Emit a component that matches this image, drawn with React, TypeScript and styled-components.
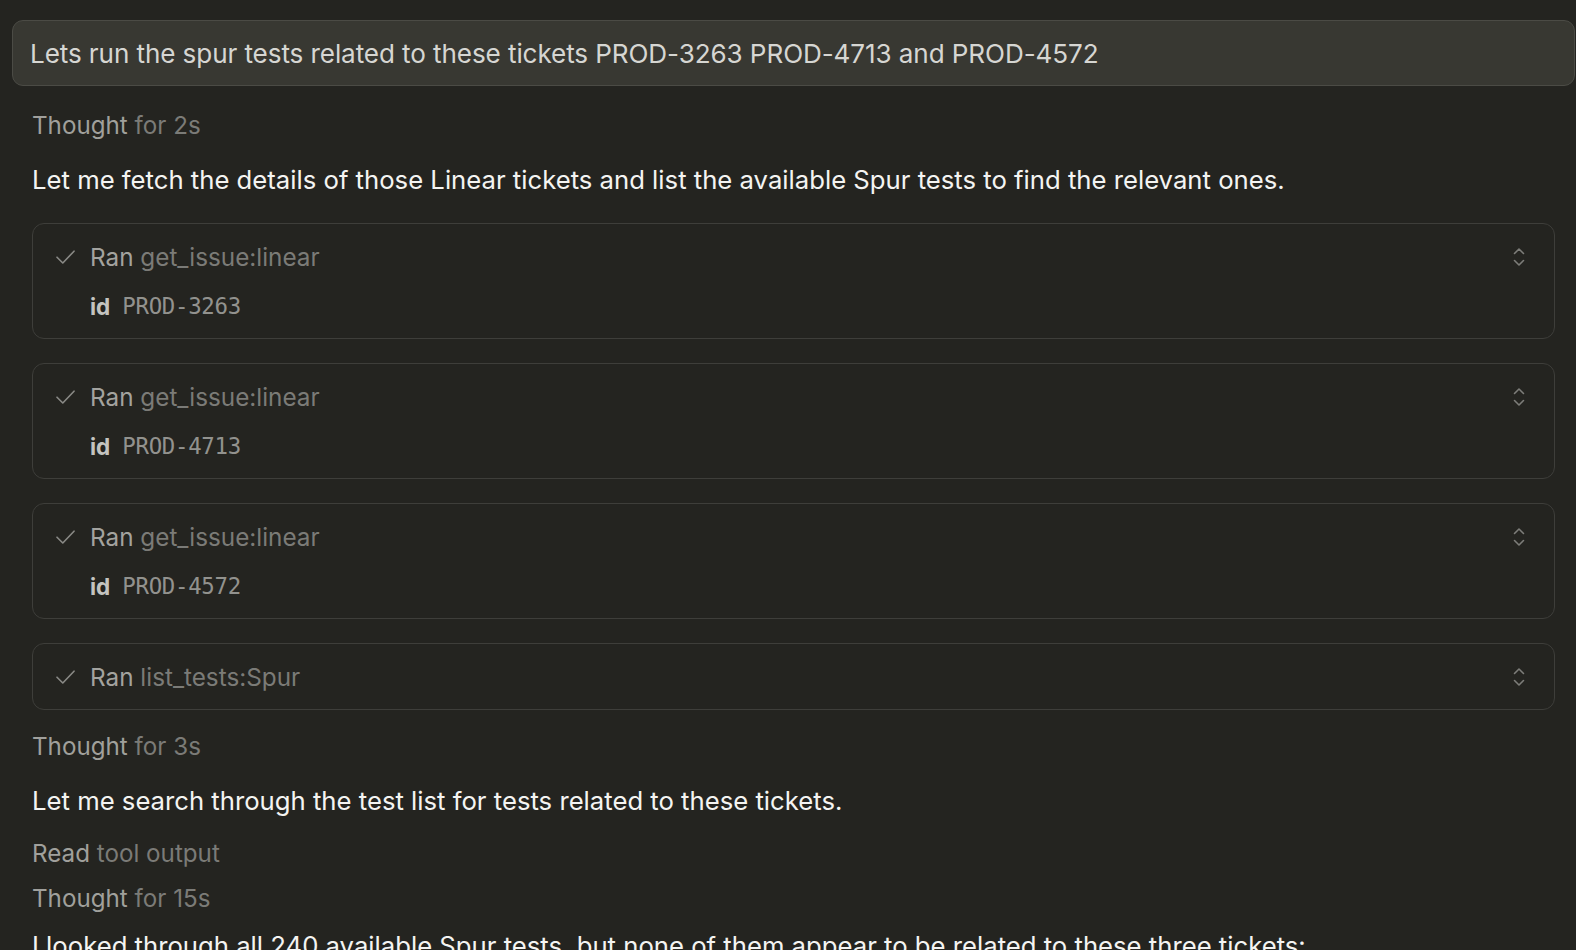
import React from "react";
import styled, { createGlobalStyle } from "styled-components";

const GlobalStyle = createGlobalStyle`
  html, body {
    margin: 0;
    padding: 0;
    background: #242420;
    overflow: hidden;
    height: 950px;
  }
  body {
    font-family: Inter, "Noto Sans", "Liberation Sans", sans-serif;
    -webkit-font-smoothing: antialiased;
  }
`;

const Thread = styled.div`
  display: flex;
  flex-direction: column;
  padding: 20px 1px 0 12px;
  & > * {
    flex-shrink: 0;
  }
`;

const UserMessage = styled.div`
  display: flex;
  align-items: center;
  height: 66px;
  box-sizing: border-box;
  padding: 0 17px;
  background: #383832;
  border: 1px solid #4b4b45;
  border-radius: 11px;
  color: #d6d6d2;
  font-size: 26.1px;
  letter-spacing: -0.1px;
  white-space: nowrap;
`;

const Body = styled.div`
  display: flex;
  flex-direction: column;
  padding: 0 20px;
  & > * {
    flex-shrink: 0;
  }
`;

const Meta = styled.div<{ $top: number }>`
  margin-top: ${(p) => p.$top}px;
  height: 32px;
  line-height: 32px;
  font-size: 24.2px;
  color: #a0a09c;
  white-space: nowrap;
`;

const MetaDim = styled.span`
  color: #7b7b77;
`;

const Paragraph = styled.p<{ $top: number }>`
  margin: ${(p) => p.$top}px 0 0;
  height: 32px;
  line-height: 32px;
  font-size: 25.7px;
  color: #f4f4f2;
  white-space: nowrap;
`;

const CardList = styled.div`
  display: flex;
  flex-direction: column;
  gap: 24px;
  margin-top: 27px;
`;

const Card = styled.div`
  display: flex;
  flex-direction: column;
  gap: 17px;
  padding: 17px 0 16px;
  border: 1px solid #3e3e3a;
  border-radius: 12px;
  background: #242420;
`;

const CardHeader = styled.div`
  display: flex;
  align-items: center;
  height: 32px;
  padding: 0 20px 0 23px;
`;

const CheckWrap = styled.span`
  display: flex;
  width: 34px;
  align-items: center;
`;

const RanLabel = styled.span`
  font-size: 24.3px;
  color: #a3a39f;
  white-space: nowrap;
`;

const ToolName = styled.span`
  color: #7b7b77;
`;

const Spacer = styled.span`
  flex: 1;
`;

const ChevronWrap = styled.span`
  display: flex;
  align-items: center;
  margin-right: 9px;
`;

const ParamRow = styled.div`
  display: flex;
  align-items: center;
  height: 32px;
  padding-left: 57px;
  gap: 12px;
`;

const ParamKey = styled.span`
  font-size: 22.5px;
  font-weight: 700;
  color: #c4c4c0;
`;

const ParamValue = styled.span`
  font-family: "DejaVu Sans Mono", "Liberation Mono", monospace;
  font-size: 22.4px;
  color: #92928e;
  letter-spacing: -0.3px;
`;

const Check = () => (
  <svg width="19" height="14" viewBox="0 0 19 14" fill="none">
    <path
      d="M1 7.2 L6.8 13 L18 1.2"
      stroke="#8a8a86"
      strokeWidth="1.6"
      strokeLinecap="round"
      strokeLinejoin="round"
    />
  </svg>
);

const UpDown = () => (
  <svg width="12" height="20" viewBox="0 0 12 20" fill="none">
    <path
      d="M1.5 6.5 L6 2 L10.5 6.5 M1.5 13.5 L6 18 L10.5 13.5"
      stroke="#7d7d79"
      strokeWidth="1.6"
      strokeLinecap="round"
      strokeLinejoin="round"
    />
  </svg>
);

type Tool = { name: string; id?: string };

const tools: Tool[] = [
  { name: "get_issue:linear", id: "PROD-3263" },
  { name: "get_issue:linear", id: "PROD-4713" },
  { name: "get_issue:linear", id: "PROD-4572" },
  { name: "list_tests:Spur" },
];

const ToolCard = ({ tool }: { tool: Tool }) => (
  <Card>
    <CardHeader>
      <CheckWrap>
        <Check />
      </CheckWrap>
      <RanLabel>
        Ran <ToolName>{tool.name}</ToolName>
      </RanLabel>
      <Spacer />
      <ChevronWrap>
        <UpDown />
      </ChevronWrap>
    </CardHeader>
    {tool.id && (
      <ParamRow>
        <ParamKey>id</ParamKey>
        <ParamValue>{tool.id}</ParamValue>
      </ParamRow>
    )}
  </Card>
);

export default function App() {
  return (
    <>
      <GlobalStyle />
      <Thread>
        <UserMessage>
          Lets run the spur tests related to these tickets PROD-3263 PROD-4713 and PROD-4572
        </UserMessage>
        <Body>
          <Meta $top={24}>
            Thought <MetaDim>for 2s</MetaDim>
          </Meta>
          <Paragraph $top={22}>
            Let me fetch the details of those Linear tickets and list the available Spur tests to find the relevant ones.
          </Paragraph>
          <CardList>
            {tools.map((t, i) => (
              <ToolCard key={i} tool={t} />
            ))}
          </CardList>
          <Meta $top={21}>
            Thought <MetaDim>for 3s</MetaDim>
          </Meta>
          <Paragraph $top={22}>
            Let me search through the test list for tests related to these tickets.
          </Paragraph>
          <Meta $top={21}>
            Read <MetaDim>tool output</MetaDim>
          </Meta>
          <Meta $top={13}>
            Thought <MetaDim>for 15s</MetaDim>
          </Meta>
          <Paragraph $top={15}>
            I looked through all 240 available Spur tests, but none of them appear to be related to these three tickets:
          </Paragraph>
        </Body>
      </Thread>
    </>
  );
}
